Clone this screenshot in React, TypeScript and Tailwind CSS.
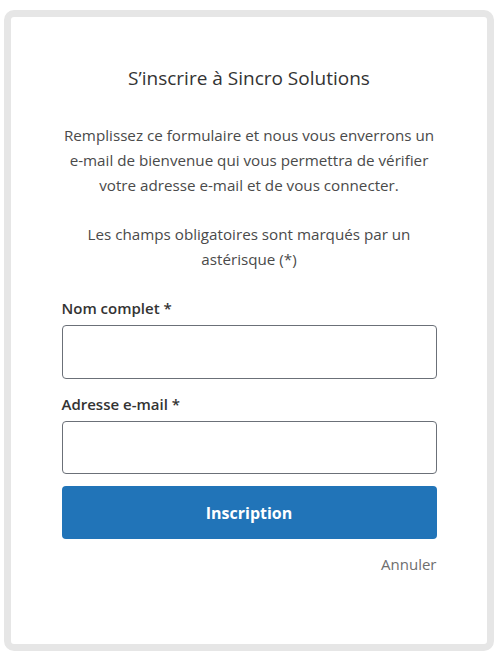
export default function App() {
  const font = { fontFamily: '"Open Sans", "Noto Sans", sans-serif' };
  return (
    <div className="w-[499px] h-[655px] bg-white" style={font}>
      <div className="ml-[4px] mt-[10px] w-[490px] h-[641px] border-[7px] border-[#e6e6e6] rounded-[10px] bg-white">
        <div className="w-[375px] mx-auto pt-[48px] flex flex-col">
          <h1 className="text-center text-[19px] leading-[26px] text-[#333333] font-normal">
            S’inscrire à Sincro Solutions
          </h1>
          <p className="mt-[32px] text-center text-[15.2px] leading-[25px] text-[#4a4a4a] whitespace-nowrap">
            Remplissez ce formulaire et nous vous enverrons un
            <br />
            e-mail de bienvenue qui vous permettra de vérifier
            <br />
            votre adresse e-mail et de vous connecter.
          </p>
          <p className="mt-[24px] text-center text-[15.2px] leading-[25px] text-[#4a4a4a] whitespace-nowrap">
            Les champs obligatoires sont marqués par un
            <br />
            astérisque (*)
          </p>
          <label className="mt-[25px] text-[15px] leading-[22px] font-semibold text-[#333333]">
            Nom complet *
          </label>
          <input className="mt-[6px] h-[54px] w-full border border-[#6b7078] rounded-[4px] outline-none" />
          <label className="mt-[14px] text-[15px] leading-[22px] font-semibold text-[#333333]">
            Adresse e-mail *
          </label>
          <input className="mt-[6px] h-[53px] w-full border border-[#6b7078] rounded-[4px] outline-none" />
          <button className="mt-[12px] h-[53px] w-full rounded-[4px] bg-[#2174b8] text-white text-[16px] font-bold">
            Inscription
          </button>
          <div className="mt-[14px] text-right text-[15px] leading-[22px] text-[#6e6e6e]">
            Annuler
          </div>
        </div>
      </div>
    </div>
  );
}
